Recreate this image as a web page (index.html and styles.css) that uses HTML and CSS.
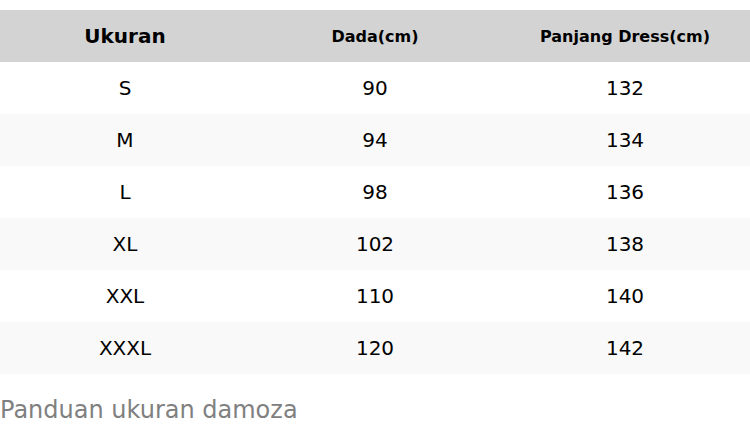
FILE: index.html
```html
<!DOCTYPE html>
<html>
<head>
<meta charset="utf-8">
<link rel="stylesheet" href="styles.css">
</head>
<body>
<div class="wrap">
<table class="size-table">
  <thead>
    <tr><th class="main">Ukuran</th><th>Dada(cm)</th><th>Panjang Dress(cm)</th></tr>
  </thead>
  <tbody>
    <tr><td>S</td><td>90</td><td>132</td></tr>
    <tr><td>M</td><td>94</td><td>134</td></tr>
    <tr><td>L</td><td>98</td><td>136</td></tr>
    <tr><td>XL</td><td>102</td><td>138</td></tr>
    <tr><td>XXL</td><td>110</td><td>140</td></tr>
    <tr><td>XXXL</td><td>120</td><td>142</td></tr>
  </tbody>
</table>
<p class="caption">Panduan ukuran damoza</p>
</div>
</body>
</html>
```
FILE: styles.css
```css
html, body {
  margin: 0;
  padding: 0;
  background: #ffffff;
}
body {
  font-family: "DejaVu Sans", sans-serif;
  color: #000;
}
.wrap {
  padding-top: 10px;
}
.size-table {
  width: 750px;
  border-collapse: collapse;
  table-layout: fixed;
}
.size-table th,
.size-table td {
  height: 52px;
  padding: 0;
  text-align: center;
  vertical-align: middle;
}
.size-table thead tr {
  background: #d3d3d3;
}
.size-table th {
  font-size: 16px;
  font-weight: bold;
}
.size-table th.main {
  font-size: 20px;
}
.size-table td {
  font-size: 20px;
}
.size-table tbody tr:nth-child(even) {
  background: #f9f9f9;
}
.caption {
  margin: 22px 0 0 0;
  font-size: 24px;
  color: #808080;
}
```
